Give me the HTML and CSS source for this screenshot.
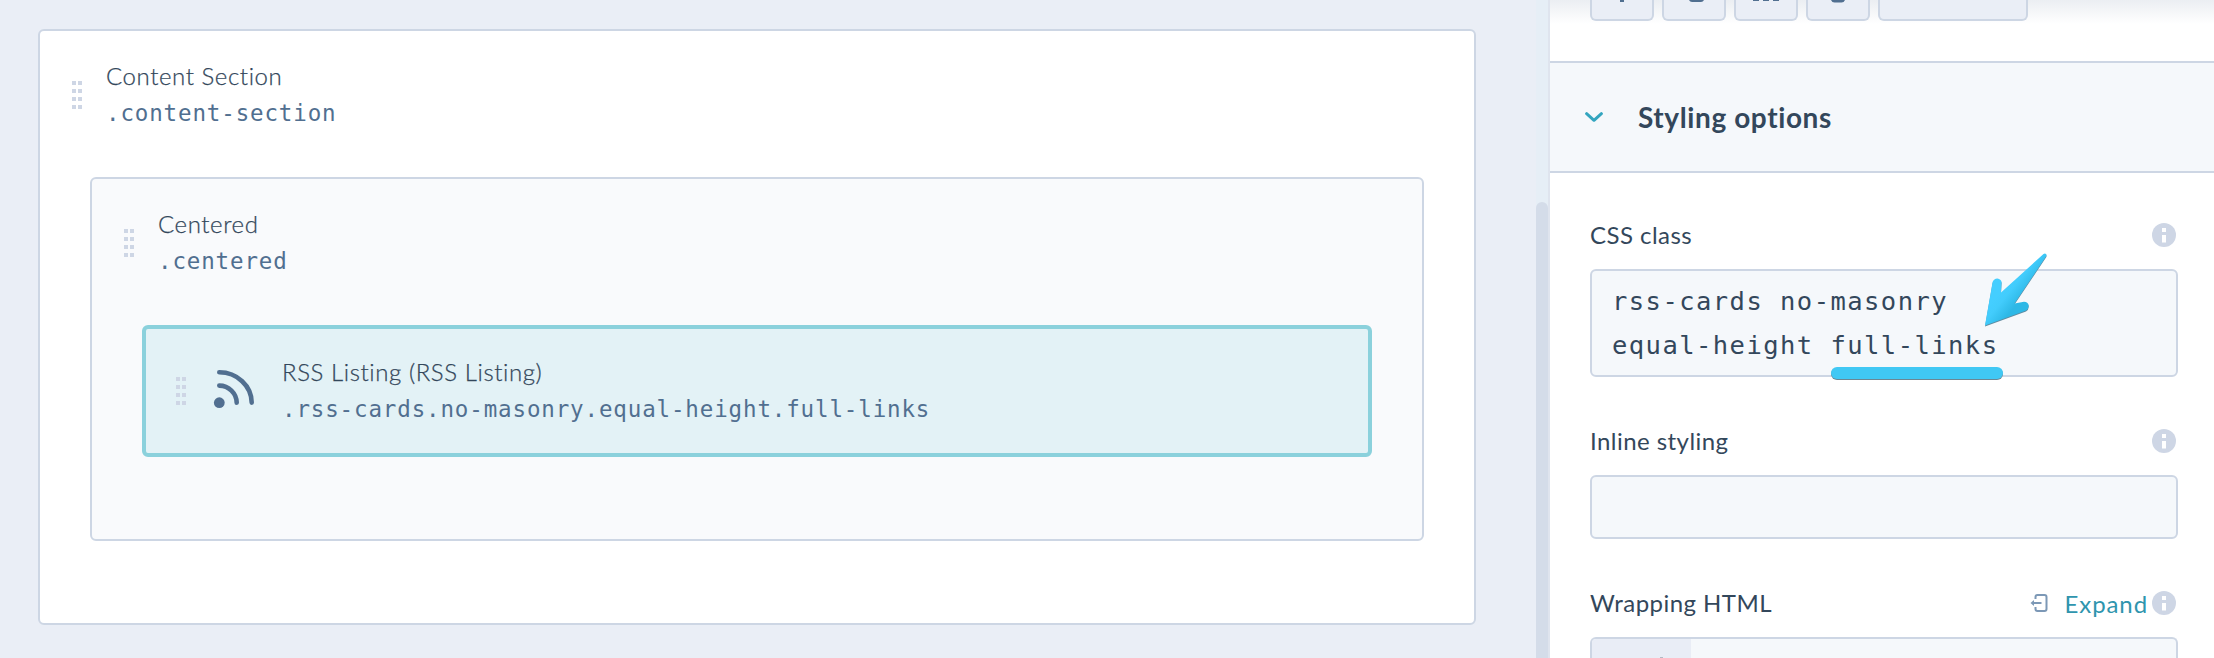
FILE: index.html
```
<!DOCTYPE html>
<html lang="en">
<head>
  <meta charset="UTF-8">
  <meta name="viewport" content="width=device-width, initial-scale=1.0">
  <title>Module Editor</title>
  <link rel="stylesheet" href="styles.css">
</head>
<body>
  <main class="canvas">
    <section class="module">
      <header class="module-header">
        <svg class="grip" width="10" height="28" viewBox="0 0 10 28"><path d="M0 0h4v4H0zM6 0h4v4H6zM0 8h4v4H0zM6 8h4v4H6zM0 16h4v4H0zM6 16h4v4H6zM0 24h4v4H0zM6 24h4v4H6z"/></svg>
        <div class="module-text">
          <div class="module-name">Content Section</div>
          <div class="module-class">.content-section</div>
        </div>
      </header>

      <section class="module nested">
        <header class="module-header">
          <svg class="grip" width="10" height="28" viewBox="0 0 10 28"><path d="M0 0h4v4H0zM6 0h4v4H6zM0 8h4v4H0zM6 8h4v4H6zM0 16h4v4H0zM6 16h4v4H6zM0 24h4v4H0zM6 24h4v4H6z"/></svg>
          <div class="module-text">
            <div class="module-name">Centered</div>
            <div class="module-class">.centered</div>
          </div>
        </header>

        <section class="module selected">
          <header class="module-header">
            <svg class="grip" width="10" height="28" viewBox="0 0 10 28"><path d="M0 0h4v4H0zM6 0h4v4H6zM0 8h4v4H0zM6 8h4v4H6zM0 16h4v4H0zM6 16h4v4H6zM0 24h4v4H0zM6 24h4v4H6z"/></svg>
            <svg class="rss-icon" width="42" height="42" viewBox="0 0 42 42" fill="none" stroke="#516f90" stroke-width="4.6" stroke-linecap="round">
              <circle cx="6.300" cy="32.700" r="5.400" fill="#516f90" stroke="none"/>
              <path d="M6.300 15.600a17.400 17.400 0 0 1 17.400 17"/>
              <path d="M6.300 2.300a32.500 30.500 0 0 1 32.400 30.300"/>
            </svg>
            <div class="module-text">
              <div class="module-name">RSS Listing (RSS Listing)</div>
              <div class="module-class">.rss-cards.no-masonry.equal-height.full-links</div>
            </div>
          </header>
        </section>
      </section>
    </section>
  </main>

  <div class="scroll-track">
    <div class="scroll-thumb"></div>
  </div>

  <aside class="sidebar">
    <div class="toolbar">
      <div class="tool"><svg width="60" height="19" viewBox="0 0 60 19"><path d="M28 0h4v2h-4z"/></svg></div>
      <div class="tool"><svg width="60" height="19" viewBox="0 0 60 19"><path d="M25 0h15q-1 2-3 2h-9q-2 0-3-2z"/></svg></div>
      <div class="tool"><svg width="60" height="19" viewBox="0 0 60 19"><path d="M17 0h6v1h-6zM27 0h6v1h-6zM37 0h6v1h-6z"/></svg></div>
      <div class="tool"><svg width="60" height="19" viewBox="0 0 60 19"><path d="M23 0h14q-1 2.6-3.5 2.6h-7Q24 2.6 23 0z"/></svg></div>
      <div class="tool wide"></div>
    </div>

    <div class="section-header">
      <svg width="18" height="11" viewBox="0 0 18 11" fill="none" stroke="#33a5bf" stroke-width="3" stroke-linecap="round" stroke-linejoin="round">
        <polyline points="1.6 1.7 9 8.3 16.4 1.7"></polyline>
      </svg>
      <h2>Styling options</h2>
    </div>

    <div class="fields">
      <div class="field">
        <div class="field-header">
          <label>CSS class</label>
          <svg class="info" width="24" height="24" viewBox="0 0 24 24"><circle cx="12" cy="12" r="12"/><path d="M10 5h4v4h-4zM10 12h4v7.5h-4z" fill="#fff"/></svg>
        </div>
        <div class="input textarea">rss-cards no-masonry<br>equal-height <span class="marked">full-links</span>
          <svg class="arrow" width="66" height="76" viewBox="0 0 66 76">
            <defs>
              <linearGradient id="arrow-fill" gradientUnits="userSpaceOnUse" x1="22" y1="34" x2="38" y2="47">
                <stop offset="0" stop-color="#44ceff"/>
                <stop offset="0.35" stop-color="#42ccfc"/>
                <stop offset="1" stop-color="#2db8e6"/>
              </linearGradient>
            </defs>
            <path fill="url(#arrow-fill)" d="M2 73.5L9.6 30Q11 26.4 14.4 26.5Q18 27 18.6 30L18 40.5L60.5 2Q62 1 63 2Q64 3 63 4.5L31.5 51.5L41 49.8Q45 50 45.6 53Q46.2 56.5 43 58.6Z"/>
          </svg>
        </div>
      </div>

      <div class="field">
        <div class="field-header">
          <label>Inline styling</label>
          <svg class="info" width="24" height="24" viewBox="0 0 24 24"><circle cx="12" cy="12" r="12"/><path d="M10 5h4v4h-4zM10 12h4v7.5h-4z" fill="#fff"/></svg>
        </div>
        <div class="input"></div>
      </div>

      <div class="field">
        <div class="field-header">
          <label>Wrapping HTML</label>
          <a class="expand">
            <svg width="18" height="20" viewBox="0 0 18 20" fill="none" stroke="#7c98b6" stroke-width="2" stroke-linejoin="round">
              <path d="M5.5 6V4q0-2 2-2h7q2 0 2 2v12q0 2-2 2h-7q-2 0-2-2v-2"/>
              <path d="M2 10h9.5"/>
              <path d="M4 7L0.5 10L4 13z" fill="#7c98b6" stroke="none"/>
            </svg>
            <span>Expand</span>
          </a>
          <svg class="info" width="24" height="24" viewBox="0 0 24 24"><circle cx="12" cy="12" r="12"/><path d="M10 5h4v4h-4zM10 12h4v7.5h-4z" fill="#fff"/></svg>
        </div>
        <div class="input code-editor">
          <div class="gutter">
            <svg width="99" height="19" viewBox="0 0 99 19"><path d="M68 18h3v1h-3z" fill="#b3b9c4"/></svg>
          </div>
        </div>
      </div>
    </div>
  </aside>
</body>
</html>
```

FILE: styles.css
```
* {
  box-sizing: border-box;
}
body {
  display: flex;
  height: 658px;
  margin: 0;
  overflow: hidden;
  font-family: Lato, 'Open Sans', sans-serif;
  font-size: 24px;
  color: #33475b;
  background-color: #eaeef6;
}
svg {
  display: block;
  flex: none;
}

/* Module tree */
.canvas {
  width: 1536px;
  padding: 29px 60px 33px 38px;
}
.module {
  padding: 28px 50px 82px;
  border: 2px solid #cdd6e4;
  border-radius: 6px;
  background-color: #fff;
}
.module-header {
  display: flex;
  align-items: center;
  height: 72px;
  margin: 0 -18px 46px;
}
.grip {
  margin-right: 24px;
  fill: #ced6e5;
}
.module-text {
  height: 72px;
}
.module-name {
  height: 36px;
  line-height: 33px;
  font-weight: 300;
  letter-spacing: 0.58px;
  -webkit-text-stroke: 0.25px #33475b;
  white-space: nowrap;
}
.module-class {
  height: 36px;
  line-height: 37px;
  font-family: 'DejaVu Sans Mono', monospace;
  font-size: 22.5px;
  letter-spacing: 0.86px;
  color: #516f90;
  white-space: nowrap;
}
.module.nested {
  background-color: #f9fafc;
}
.module.selected {
  padding: 26px 48px;
  border: 4px solid #8bd1dc;
  background-color: #e3f2f6;
}
.selected .module-header {
  margin-bottom: 0;
}
.rss-icon {
  margin: 0 27px 0 3px;
}

/* Scrollbar */
.scroll-track {
  width: 12px;
  padding-top: 202px;
  background-color: #e6eef6;
}
.scroll-thumb {
  height: 100%;
  border-radius: 6px 6px 0 0;
  background-color: #d4dce9;
}

/* Sidebar */
.sidebar {
  flex: 1;
  overflow: hidden;
  border-left: 2px solid #dfe4ee;
  background-color: #fff;
}
.toolbar {
  display: flex;
  gap: 8px;
  height: 61px;
  padding-left: 40px;
  background: linear-gradient(#ebeef2, #fff 24px);
}
.tool {
  width: 64px;
  height: 21px;
  border: 2px solid #cdd6e4;
  border-top: 0;
  border-radius: 0 0 6px 6px;
  background-color: #eaeef6;
  fill: #516f90;
}
.tool.wide {
  width: 150px;
}
.section-header {
  display: flex;
  align-items: center;
  gap: 35px;
  height: 112px;
  padding-left: 35px;
  border-top: 2px solid #cdd6e4;
  border-bottom: 2px solid #cdd6e4;
  background-color: #f5f8fb;
}
.section-header h2 {
  margin: 0;
  font-size: 28px;
  font-weight: 700;
  line-height: 36px;
  letter-spacing: 0.6px;
}
.fields {
  padding: 50px 36px 0 40px;
}
.field {
  margin-bottom: 52px;
}
.field:last-child {
  margin-bottom: 0;
}
.field-header {
  display: flex;
  align-items: center;
  height: 24px;
  margin-bottom: 22px;
  padding-right: 2px;
}
.field-header label {
  flex: 1;
  padding-bottom: 2px;
  letter-spacing: 0.45px;
}
.info {
  fill: #ced6e5;
}
.input {
  position: relative;
  height: 64px;
  border: 2px solid #cdd6e4;
  border-radius: 6px;
  background-color: #f5f8fb;
}
.textarea {
  height: 108px;
  padding: 8px 20px;
  font-family: 'DejaVu Sans Mono', monospace;
  font-size: 25.5px;
  line-height: 44px;
  letter-spacing: 1.45px;
}
.marked {
  position: relative;
}
.marked::after {
  content: '';
  position: absolute;
  left: 1px;
  bottom: -19px;
  width: 172px;
  height: 12px;
  border-radius: 6px;
  background-color: #40c8f4;
  box-shadow: 0 1px 0 #6b8794;
}
.arrow {
  position: absolute;
  left: 391px;
  top: -19px;
  filter: drop-shadow(0 1px 0 #5f8ba0);
}
.expand {
  display: flex;
  align-items: center;
  gap: 17px;
  margin-right: 4px;
  letter-spacing: 0.9px;
  color: #2f95ae;
}
.code-editor {
  height: 21px;
  overflow: hidden;
  border-bottom: 0;
  border-radius: 6px 6px 0 0;
}
.gutter {
  width: 99px;
  height: 100%;
  background-color: #e9edf6;
}
```
